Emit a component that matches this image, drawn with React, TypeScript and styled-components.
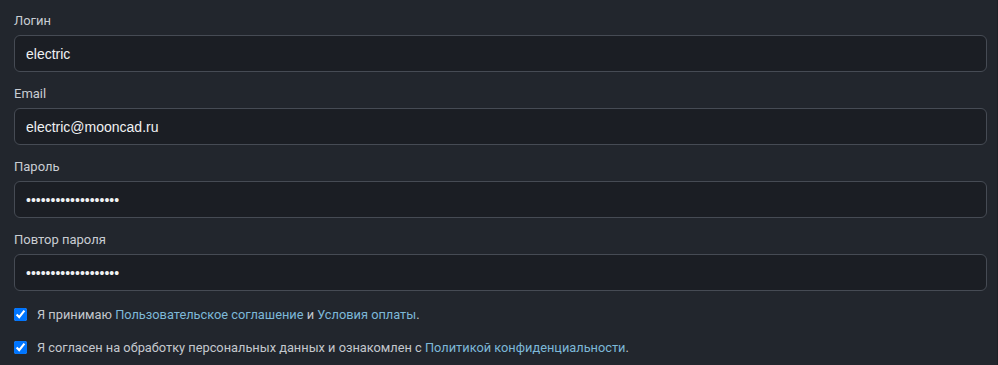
import styled, {createGlobalStyle} from "styled-components";

const GlobalStyle = createGlobalStyle`
  html, body {
    margin: 0;
    padding: 0;
    background-color: #22262d;
  }
`;

const Page = styled.div`
  box-sizing: border-box;
  width: 998px;
  height: 365px;
  padding: 12px 10px 0 14px;
  background-color: #22262d;
  border-right: 1px solid #1d2026;
  font-family: Roboto, "Liberation Sans", sans-serif;
  display: flex;
  flex-direction: column;
`;

const Field = styled.div`
  display: flex;
  flex-direction: column;
  gap: 5px;
  margin-bottom: 13px;
`;

const Label = styled.label`
  font-size: 13px;
  line-height: 18px;
  color: #c9cdd3;
`;

const Input = styled.input`
  box-sizing: border-box;
  width: 100%;
  height: 37px;
  padding: 0 11px;
  border: 1px solid #464b54;
  border-radius: 6px;
  background-color: #1b1e24;
  color: #f0f1f3;
  font-family: "Liberation Sans", Arial, sans-serif;
  font-size: 14px;
  outline: none;
`;

const Agreements = styled.div`
  display: flex;
  flex-direction: column;
  gap: 14px;
  margin-top: 1px;
`;

const CheckRow = styled.label`
  display: flex;
  align-items: center;
  gap: 10px;
  font-size: 12.8px;
  line-height: 19px;
  color: #c4c8ce;
`;

const Check = styled.input`
  margin: 0;
  width: 13px;
  height: 13px;
  accent-color: #0075ff;
`;

const Link = styled.a`
  color: #7db8d8;
  text-decoration: none;
`;

const fields = [
    {label: "Логин", type: "text", value: "electric"},
    {label: "Email", type: "email", value: "electric@mooncad.ru"},
    {label: "Пароль", type: "password", value: "electricpassword123"},
    {label: "Повтор пароля", type: "password", value: "electricpassword123"},
];

const App = () => {
    return (
        <>
            <GlobalStyle/>
            <Page>
                {fields.map(({label, type, value}, index) => (
                    <Field key={index}>
                        <Label>{label}</Label>
                        <Input type={type} defaultValue={value}/>
                    </Field>
                ))}
                <Agreements>
                    <CheckRow>
                        <Check type="checkbox" defaultChecked/>
                        <span>Я принимаю <Link href="#">Пользовательское соглашение</Link> и <Link href="#">Условия
                            оплаты</Link>.</span>
                    </CheckRow>
                    <CheckRow>
                        <Check type="checkbox" defaultChecked/>
                        <span>Я согласен на обработку персональных данных и ознакомлен с <Link href="#">Политикой
                            конфиденциальности</Link>.</span>
                    </CheckRow>
                </Agreements>
            </Page>
        </>
    );
};

export default App;
